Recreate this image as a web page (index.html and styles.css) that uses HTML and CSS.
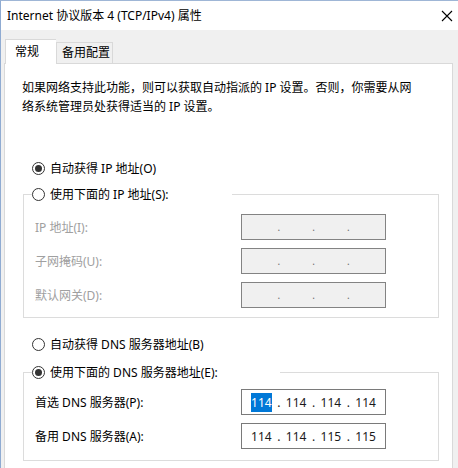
FILE: index.html
```html
<!DOCTYPE html>
<html lang="zh-CN">
<head>
    <meta charset="UTF-8">
    <title>Internet 协议版本 4 (TCP/IPv4) 属性</title>
    <link rel="stylesheet" href="styles.css">
</head>
<body>
    <div class="window">
        <div class="titlebar">
            <span class="title">Internet 协议版本 4 (TCP/IPv4) 属性</span>
            <svg class="close" width="12" height="12" viewBox="0 0 12 12">
                <path d="M1 1 L11 11 M11 1 L1 11" stroke="#000" stroke-width="1.1" fill="none"/>
            </svg>
        </div>

        <div class="client">
            <div class="tabs">
                <div class="tab active">常规</div>
                <div class="tab">备用配置</div>
            </div>

            <div class="panel">
                <p class="desc">如果网络支持此功能，则可以获取自动指派的 IP 设置。否则，你需要从网<br>络系统管理员处获得适当的 IP 设置。</p>

                <label class="radio top-radio">
                    <span class="dot checked"></span>自动获得 IP 地址(O)
                </label>

                <fieldset class="group ip-group disabled">
                    <legend class="radio legend-ip">
                        <span class="dot"></span>使用下面的 IP 地址(S):
                    </legend>
                    <div class="row">
                        <span class="label">IP 地址(I):</span>
                        <div class="ipbox off">
                            <span class="seg"></span><span class="sep">.</span>
                            <span class="seg"></span><span class="sep">.</span>
                            <span class="seg"></span><span class="sep">.</span>
                            <span class="seg"></span>
                        </div>
                    </div>
                    <div class="row">
                        <span class="label">子网掩码(U):</span>
                        <div class="ipbox off">
                            <span class="seg"></span><span class="sep">.</span>
                            <span class="seg"></span><span class="sep">.</span>
                            <span class="seg"></span><span class="sep">.</span>
                            <span class="seg"></span>
                        </div>
                    </div>
                    <div class="row">
                        <span class="label">默认网关(D):</span>
                        <div class="ipbox off">
                            <span class="seg"></span><span class="sep">.</span>
                            <span class="seg"></span><span class="sep">.</span>
                            <span class="seg"></span><span class="sep">.</span>
                            <span class="seg"></span>
                        </div>
                    </div>
                </fieldset>

                <label class="radio dns-radio">
                    <span class="dot"></span>自动获得 DNS 服务器地址(B)
                </label>

                <fieldset class="group dns-group">
                    <legend class="radio legend-dns">
                        <span class="dot checked"></span>使用下面的 DNS 服务器地址(E):
                    </legend>
                    <div class="row">
                        <span class="label">首选 DNS 服务器(P):</span>
                        <div class="ipbox">
                            <span class="seg"><span class="sel">114</span></span><span class="sep">.</span>
                            <span class="seg">114</span><span class="sep">.</span>
                            <span class="seg">114</span><span class="sep">.</span>
                            <span class="seg">114</span>
                        </div>
                    </div>
                    <div class="row">
                        <span class="label">备用 DNS 服务器(A):</span>
                        <div class="ipbox">
                            <span class="seg">114</span><span class="sep">.</span>
                            <span class="seg">114</span><span class="sep">.</span>
                            <span class="seg">115</span><span class="sep">.</span>
                            <span class="seg">115</span>
                        </div>
                    </div>
                </fieldset>
            </div>
        </div>
    </div>
</body>
</html>
```

FILE: styles.css
```css
* {
    margin: 0;
    padding: 0;
    box-sizing: border-box;
}

body {
    width: 458px;
    height: 468px;
    overflow: hidden;
    background: #f0f0f0;
    font-family: "Noto Sans", "Noto Sans CJK SC", sans-serif;
    font-size: 12px;
    line-height: 19px;
    color: #000;
}

.window {
    height: 468px;
    border-left: 1px solid #8fabd2;
    border-top: 1px solid #9fb6d6;
    background: #f0f0f0;
}

.titlebar {
    height: 29px;
    background: #fff;
    display: flex;
    align-items: center;
    justify-content: space-between;
    padding: 0 0 0 6px;
}

.title {
    color: #000;
}

.close {
    display: block;
    margin-right: 5px;
}

.client {
    padding: 9px 0 0 3px;
}

/* tab strip */
.tabs {
    display: flex;
    align-items: flex-end;
    padding-left: 1px;
    position: relative;
    z-index: 1;
}

.tab {
    height: 21px;
    padding: 0 0 0 5px;
    width: 57px;
    border: 1px solid #d9d9d9;
    border-bottom: none;
    background: #f0f0f0;
    line-height: 20px;
}

.tab.active {
    height: 25px;
    width: 51px;
    padding-left: 9px;
    background: #fff;
    border-right: none;
    margin-bottom: -1px;
    line-height: 24px;
}

.panel {
    width: 449px;
    height: 420px;
    background: #fff;
    border: 1px solid #d9d9d9;
    padding: 14px 0 0 17px;
}

.desc {
    line-height: 19px;
}

/* radio buttons */
.radio {
    display: flex;
    align-items: center;
    height: 19px;
    background: #fff;
}

.dot {
    width: 13px;
    height: 13px;
    border: 1px solid #333;
    border-radius: 50%;
    margin-right: 5px;
    display: flex;
    align-items: center;
    justify-content: center;
    flex-shrink: 0;
}

.dot.checked::after {
    content: "";
    width: 7px;
    height: 7px;
    border-radius: 50%;
    background: #333;
}

.top-radio {
    margin: 43px 0 0 10px;
}

.dns-radio {
    margin: 17px 0 0 10px;
}

/* group boxes */
.group {
    width: 416px;
    margin-left: 1px;
    border: 1px solid #dcdcdc;
    padding: 0 0 0 11px;
}

.ip-group {
    margin-top: 7px;
    padding-bottom: 9px;
}

.dns-group {
    margin-top: 9px;
    padding-bottom: 11px;
}

.group legend {
    margin-left: -3px;
    padding: 0;
}

.legend-ip {
    width: 200px;
}

.legend-dns {
    width: 248px;
}

.row {
    display: grid;
    grid-template-columns: 206px 145px;
    align-items: center;
    height: 26px;
    margin-top: 8px;
}

.ip-group .row:first-of-type {
    margin-top: 10px;
}

.dns-group .row:first-of-type {
    margin-top: 7px;
}

.disabled .label {
    color: #a0a0a0;
}

/* ip address fields */
.ipbox {
    height: 26px;
    border: 1px solid #7a7a7a;
    background: #fff;
    display: flex;
    align-items: center;
    padding: 0 4px;
}

.ipbox.off {
    background: #f0f0f0;
    border-color: #838383;
}

.seg {
    flex: 1;
    text-align: center;
    color: #1a1a1a;
}

.sep {
    width: 4px;
    text-align: center;
    color: #1a1a1a;
}

.ipbox.off .sep {
    color: #6d6d6d;
    font-size: 10px;
}

.sel {
    background: #0078d7;
    color: #fff;
    padding: 1px 0;
}
```
